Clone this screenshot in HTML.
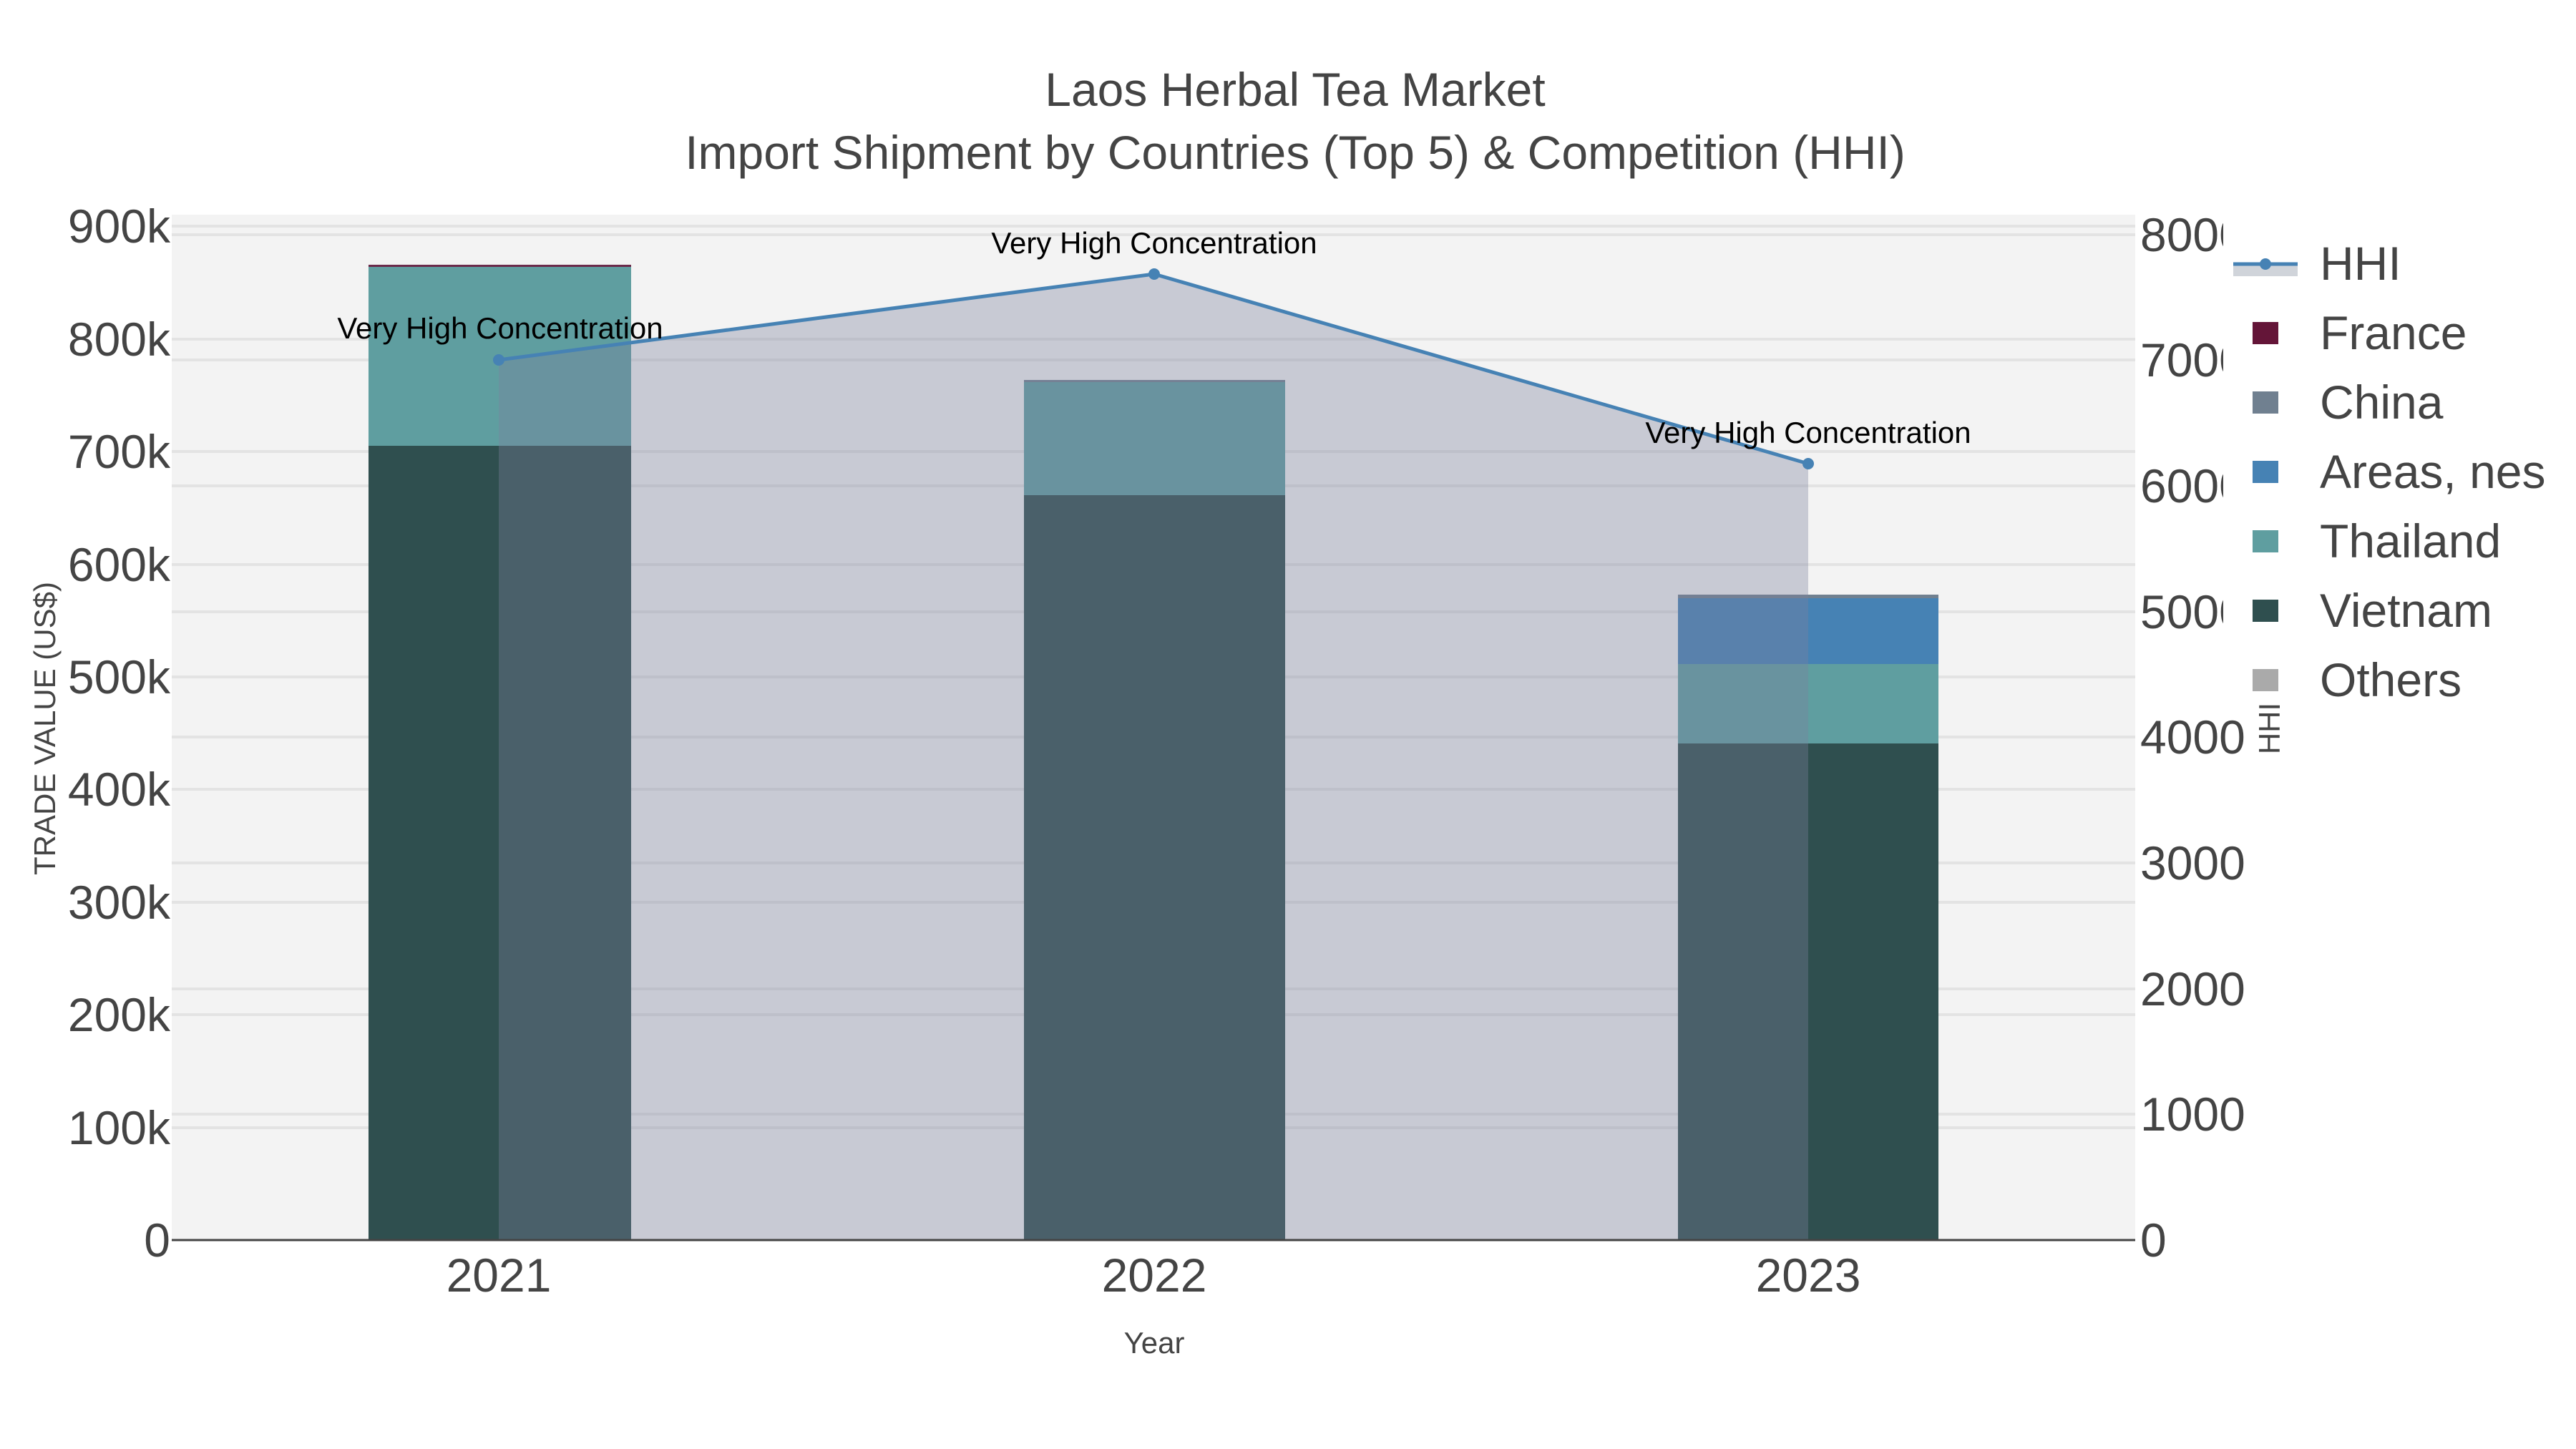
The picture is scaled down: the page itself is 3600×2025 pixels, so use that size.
<!DOCTYPE html>
<html><head><meta charset="utf-8"><style>html,body{margin:0;padding:0;background:#fff}svg{display:block}text{font-family:"Liberation Sans",sans-serif}</style></head>
<body>
<svg width="3600" height="2025" viewBox="0 0 3600 2025">
<rect x="240" y="300" width="2744" height="1433" fill="#f3f3f3"/>
<g stroke="#e3e3e3" stroke-width="4">
<line x1="240" x2="2984" y1="1576" y2="1576"/><line x1="240" x2="2984" y1="1418" y2="1418"/><line x1="240" x2="2984" y1="1261" y2="1261"/><line x1="240" x2="2984" y1="1103" y2="1103"/><line x1="240" x2="2984" y1="946" y2="946"/><line x1="240" x2="2984" y1="789" y2="789"/><line x1="240" x2="2984" y1="631" y2="631"/><line x1="240" x2="2984" y1="474" y2="474"/><line x1="240" x2="2984" y1="316" y2="316"/>
<line x1="240" x2="2984" y1="1557" y2="1557"/><line x1="240" x2="2984" y1="1382" y2="1382"/><line x1="240" x2="2984" y1="1206" y2="1206"/><line x1="240" x2="2984" y1="1030" y2="1030"/><line x1="240" x2="2984" y1="855" y2="855"/><line x1="240" x2="2984" y1="679" y2="679"/><line x1="240" x2="2984" y1="503" y2="503"/><line x1="240" x2="2984" y1="328" y2="328"/>
</g>
<rect x="515" y="623" width="367" height="1110" fill="#2f4f4f"/>
<rect x="515" y="372" width="367" height="251" fill="#5f9ea0"/>
<rect x="515" y="370" width="367" height="3" fill="#6b2a4a"/>
<rect x="1431" y="692" width="365" height="1041" fill="#2f4f4f"/>
<rect x="1431" y="533" width="365" height="159" fill="#5f9ea0"/>
<rect x="1431" y="531" width="365" height="3" fill="#708090"/>
<rect x="2345" y="1039" width="364" height="694" fill="#2f4f4f"/>
<rect x="2345" y="928" width="364" height="111" fill="#5f9ea0"/>
<rect x="2345" y="836" width="364" height="92" fill="#4682b4"/>
<rect x="2345" y="831" width="364" height="5" fill="#708090"/>
<polygon points="697,503 1613,383 2527,648 2527,1733 697,1733" fill="rgb(123,130,156)" fill-opacity="0.357"/>
<polyline points="697,503 1613,383 2527,648" fill="none" stroke="#4682b4" stroke-width="5"/>
<circle cx="697" cy="503" r="8" fill="#4682b4"/><circle cx="1613" cy="383" r="8" fill="#4682b4"/><circle cx="2527" cy="648" r="8" fill="#4682b4"/>
<line x1="240" x2="2984" y1="1733" y2="1733" stroke="#444" stroke-width="3"/>
<g font-size="42" fill="#000" text-anchor="middle">
<text x="699" y="473">Very High Concentration</text>
<text x="1613" y="354">Very High Concentration</text>
<text x="2527" y="619">Very High Concentration</text>
</g>
<g font-size="66" fill="#444" text-anchor="end">
<text x="238" y="1756">0</text><text x="238" y="1599">100k</text><text x="238" y="1441">200k</text><text x="238" y="1284">300k</text><text x="238" y="1126">400k</text><text x="238" y="969">500k</text><text x="238" y="812">600k</text><text x="238" y="654">700k</text><text x="238" y="497">800k</text><text x="238" y="339">900k</text>
</g>
<g font-size="66" fill="#444">
<text x="2991" y="1756">0</text><text x="2991" y="1580">1000</text><text x="2991" y="1405">2000</text><text x="2991" y="1229">3000</text><text x="2991" y="1053">4000</text><text x="2991" y="878">5000</text><text x="2991" y="702">6000</text><text x="2991" y="526">7000</text><text x="2991" y="351">8000</text>
</g>
<g font-size="66" fill="#444" text-anchor="middle">
<text x="697" y="1805">2021</text><text x="1613" y="1805">2022</text><text x="2527" y="1805">2023</text>
<text x="1810" y="148">Laos Herbal Tea Market</text>
<text x="1810" y="236">Import Shipment by Countries (Top 5) &amp; Competition (HHI)</text>
</g>
<text x="1613" y="1891" font-size="42" fill="#444" text-anchor="middle">Year</text>
<text transform="translate(77,1018) rotate(-90)" font-size="42" fill="#444" text-anchor="middle">TRADE VALUE (US$)</text>
<rect x="3107" y="300" width="493" height="580" fill="#fff"/>
<text transform="translate(3186,1018) rotate(-90)" font-size="42" fill="#444" text-anchor="middle">HHI</text>
<rect x="3121" y="369" width="90" height="17" fill="#d0d4da"/>
<line x1="3121" x2="3211" y1="369" y2="369" stroke="#4682b4" stroke-width="5"/>
<circle cx="3166" cy="369" r="8" fill="#4682b4"/>
<rect x="3148" y="450" width="36" height="31" fill="#641538"/>
<rect x="3148" y="547" width="36" height="31" fill="#708090"/>
<rect x="3148" y="644" width="36" height="31" fill="#4682b4"/>
<rect x="3148" y="741" width="36" height="31" fill="#5f9ea0"/>
<rect x="3148" y="838" width="36" height="31" fill="#2f4f4f"/>
<rect x="3148" y="935" width="36" height="31" fill="#aaaaaa"/>
<g font-size="66" fill="#444">
<text x="3242" y="391">HHI</text><text x="3242" y="488">France</text><text x="3242" y="585">China</text><text x="3242" y="682">Areas, nes</text><text x="3242" y="779">Thailand</text><text x="3242" y="876">Vietnam</text><text x="3242" y="973">Others</text>
</g>
</svg>
</body></html>
